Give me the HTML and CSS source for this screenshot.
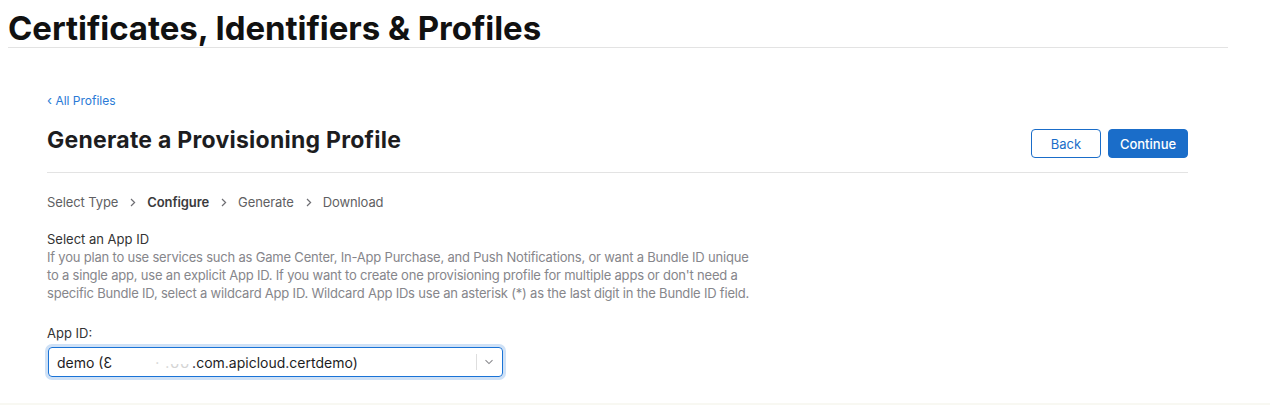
FILE: index.html
```html
<!DOCTYPE html>
<html lang="en">
<head>
<meta charset="utf-8">
<title>Certificates, Identifiers &amp; Profiles</title>
<link rel="stylesheet" href="styles.css">
</head>
<body>
<header class="page-header">
  <h1 class="page-title">Certificates, Identifiers &amp; Profiles</h1>
</header>
<main class="content">
  <a class="back-link" href="#"><span class="back-chev">‹</span> All Profiles</a>
  <div class="title-row">
    <h2 class="section-title">Generate a Provisioning Profile</h2>
    <div class="actions">
      <button class="btn btn-secondary">Back</button>
      <button class="btn btn-primary">Continue</button>
    </div>
  </div>
  <nav class="steps">
    <span class="step">Select Type</span>
    <svg class="step-sep" width="6" height="9" viewBox="0 0 6 9"><path d="M1 1 L4.6 4.5 L1 8" fill="none" stroke="#6e6e73" stroke-width="1.2"/></svg>
    <span class="step step-current">Configure</span>
    <svg class="step-sep" width="6" height="9" viewBox="0 0 6 9"><path d="M1 1 L4.6 4.5 L1 8" fill="none" stroke="#6e6e73" stroke-width="1.2"/></svg>
    <span class="step">Generate</span>
    <svg class="step-sep" width="6" height="9" viewBox="0 0 6 9"><path d="M1 1 L4.6 4.5 L1 8" fill="none" stroke="#6e6e73" stroke-width="1.2"/></svg>
    <span class="step">Download</span>
  </nav>
  <section class="field-group">
    <h3 class="field-title">Select an App ID</h3>
    <p class="field-desc">If you plan to use services such as Game Center, In-App Purchase, and Push Notifications, or want a Bundle ID unique<br>to a single app, use an explicit App ID. If you want to create one provisioning profile for multiple apps or don't need a<br>specific Bundle ID, select a wildcard App ID. Wildcard App IDs use an asterisk (*) as the last digit in the Bundle ID field.</p>
  </section>
  <section class="field">
    <label class="field-label">App ID:</label>
    <div class="select">
      <span class="select-value">demo (Ɛ<span class="blurred">· .ᴗᴗ</span>.com.apicloud.certdemo)</span>
      <span class="select-divider"></span>
      <svg class="select-chev" width="10" height="6" viewBox="0 0 10 6"><path d="M1.5 1.2 L5 4.6 L8.5 1.2" fill="none" stroke="#8a8a8e" stroke-width="1.1"/></svg>
    </div>
  </section>
</main>
<footer class="page-footer"></footer>
</body>
</html>
```

FILE: styles.css
```css
* { box-sizing: border-box; }
html, body { margin: 0; padding: 0; background: #fff; }
body {
  font-family: Inter, "Noto Sans", "Liberation Sans", sans-serif;
  color: #1d1d1f;
  width: 1270px;
  height: 405px;
  overflow: hidden;
  position: relative;
}
.page-header {
  margin-left: 8px;
  width: 1220px;
  height: 48px;
  border-bottom: 1px solid #e3e3e3;
  padding-top: 9px;
}
.page-title {
  margin: 0;
  font-size: 33px;
  font-weight: 700;
  line-height: 38px;
  letter-spacing: -0.05px;
  color: #111;
}
.content {
  margin-left: 47px;
  width: 1141px;
  padding-top: 44px;
}
.back-link {
  display: block;
  font-size: 12px;
  line-height: 16px;
  color: #2a7ad6;
  text-decoration: none;
}
.back-chev { font-size: 13px; }
.title-row {
  display: flex;
  align-items: flex-start;
  justify-content: space-between;
  margin-top: 17px;
  padding-bottom: 14px;
  border-bottom: 1px solid #e3e3e3;
}
.section-title {
  margin: 0;
  font-size: 23px;
  font-weight: 700;
  line-height: 28px;
  letter-spacing: 0.25px;
  color: #1d1d1f;
}
.actions { display: flex; gap: 7px; margin-top: 3px; }
.btn {
  font-family: inherit;
  font-size: 13px;
  height: 29px;
  border-radius: 4px;
  padding: 0;
  cursor: pointer;
}
.btn-secondary {
  width: 70px;
  background: #fff;
  color: #1a6dc9;
  border: 1px solid #1a6dc9;
}
.btn-primary {
  width: 80px;
  background: #1a6dc9;
  color: #fff;
  border: 1px solid #1a6dc9;
  font-weight: 500;
}
.steps {
  display: flex;
  align-items: center;
  margin-top: 20px;
  font-size: 13px;
  line-height: 18px;
  letter-spacing: -0.1px;
  color: #5f5f63;
}
.step-current { font-weight: 600; color: #3a3a3c; }
.step-sep { display: block; margin: 0 11px 0 12px; }
.field-group { margin-top: 19px; }
.field-title {
  margin: 0;
  font-size: 13px;
  font-weight: 400;
  line-height: 18px;
  color: #333;
}
.field-desc {
  margin: 0;
  font-size: 13px;
  line-height: 18px;
  letter-spacing: -0.2px;
  color: #86868b;
}
.field { margin-top: 22px; }
.field-label {
  display: block;
  font-size: 13px;
  line-height: 18px;
  color: #333;
}
.select {
  margin-top: 5px;
  margin-left: 1px;
  width: 455px;
  height: 30px;
  border: 1px solid #1a73d6;
  border-radius: 4px;
  box-shadow: 0 0 0 3px #cfe1f6;
  display: flex;
  align-items: center;
  padding-left: 8px;
  padding-right: 8px;
}
.select-value {
  flex: 1;
  font-size: 14px;
  color: #1d1d1f;
  white-space: nowrap;
}
.blurred {
  display: inline-block;
  width: 80px;
  color: #d4d4d4;
  text-align: right;
  letter-spacing: 1px;
  padding-right: 2px;
}
.select-divider {
  width: 1px;
  height: 16px;
  background: #dedede;
  margin-right: 7px;
}
.select-chev { display: block; }
.page-footer {
  position: absolute;
  left: 0;
  right: 0;
  bottom: 0;
  height: 2px;
  background: #f8f8f2;
}
```
